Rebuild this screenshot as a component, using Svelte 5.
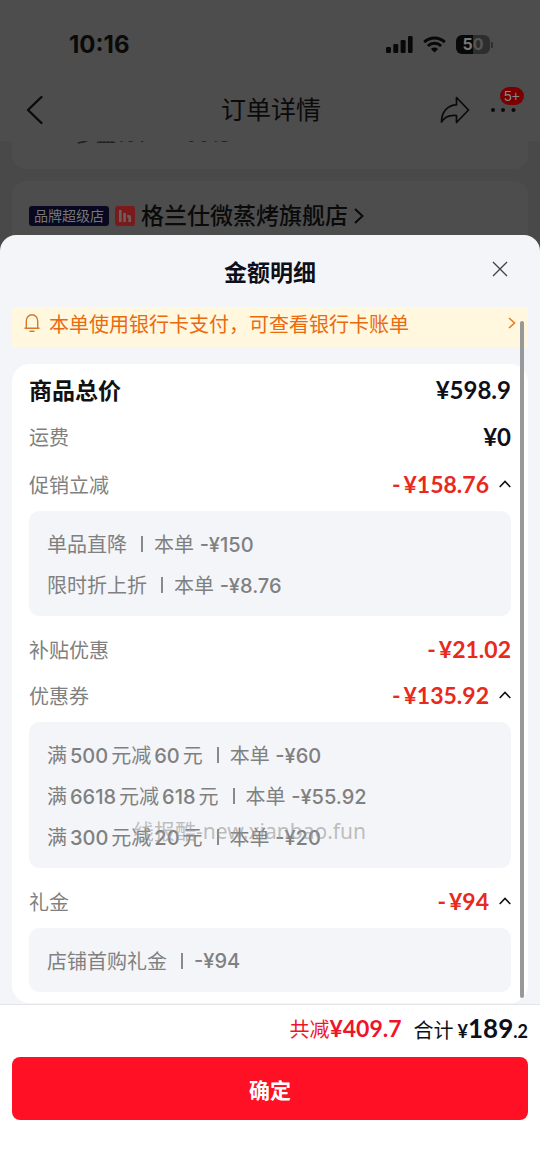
<script>
  let open = $state({ promo: true, coupon: true, gift: true });

  const groups = [
    { id: 'promo', label: '促销立减', amount: '158.76', items: [['单品直降', '本单 ', '-¥150'], ['限时折上折', '本单 ', '-¥8.76']] },
    { id: 'subsidy', label: '补贴优惠', amount: '21.02', items: [] },
    { id: 'coupon', label: '优惠券', amount: '135.92', items: [['满500元减60元', '本单 ', '-¥60'], ['满6618元减618元', '本单 ', '-¥55.92'], ['满300元减20元', '本单 ', '-¥20']] },
    { id: 'gift', label: '礼金', amount: '94', items: [['店铺首购礼金', '', '-¥94']] }
  ];

  // Digits and CJK runs are separated so that numbers get breathing room
  const runs = (text) => text.split(/(\d+)/).filter(Boolean);
</script>

<div class="page">
  <div class="behind">
    <div class="status">
      <span class="time">10:16</span>
      <div class="signals">
        <svg width="27" height="17" viewBox="0 0 27 17" fill="#080808">
          <rect x="0" y="11" width="5" height="6" rx="1.3" /><rect x="7.3" y="8" width="5" height="9" rx="1.3" />
          <rect x="14.6" y="4" width="5" height="13" rx="1.3" /><rect x="22" y="0" width="4.6" height="17" rx="1.3" />
        </svg>
        <svg width="23" height="17" viewBox="0 0 23 17" fill="none" stroke="#080808" stroke-width="3">
          <path d="M1.2 6.1a15 15 0 0 1 20.6 0" /><path d="M4.9 10a9.6 9.6 0 0 1 13.2 0" />
          <path d="M11.5 16.6 7.9 13a5.2 5.2 0 0 1 7.2 0z" fill="#080808" stroke="none" />
        </svg>
        <div class="battery">
          <span>5</span><span class="low">0</span>
          <svg class="cap" width="2" height="6" viewBox="0 0 2 6"><path d="M0 0a3 3 0 0 1 0 6z" fill="#2e2e2e" /></svg>
        </div>
      </div>
    </div>
    <div class="nav">
      <button class="plain back" aria-label="返回">
        <svg width="18" height="30" viewBox="0 0 18 30" fill="none" stroke="#0a0a0a" stroke-width="2.4" stroke-linecap="round" stroke-linejoin="round"><path d="M15.5 2 2 15l13.5 13" /></svg>
      </button>
      <h1>订单详情</h1>
      <div class="actions">
        <button class="plain" aria-label="分享">
          <svg width="30" height="28" viewBox="0 0 30 28" fill="none" stroke="#0a0a0a" stroke-width="1.7" stroke-linejoin="round"><path d="M16.5 1.500 28.500 14 16.500 26.500V19.500C10 18.800 5 20 1.500 26 1.500 15.500 8 9 16.500 8.800z" /></svg>
        </button>
        <button class="plain more" aria-label="更多">
          <svg width="26" height="6" viewBox="0 0 26 6" fill="#0a0a0a"><circle cx="3" cy="3" r="2" /><circle cx="13" cy="3" r="2" /><circle cx="23.500" cy="3" r="2" /></svg>
          <span class="count">5+</span>
        </button>
      </div>
    </div>
    <div class="list">
      <div class="addr"><span>多益101****0018</span></div>
      <div class="shop">
        <span class="tag">品牌超级店</span>
        <svg width="20" height="20" viewBox="0 0 20 20"><rect width="20" height="20" rx="3" fill="#7a1a1a" /><path d="M4 4h2.600v12H4zM8.300 7h2.600v9H8.300zM12.200 9h1.800q2 0 2 2v5h-2.600v-4.500h-1.200z" fill="#6a6060" /></svg>
        <strong>格兰仕微蒸烤旗舰店</strong>
        <svg width="10" height="16" viewBox="0 0 10 16" fill="none" stroke="#0a0a0a" stroke-width="2"><path d="m1 1 7.500 7L1 15" /></svg>
      </div>
    </div>
  </div>

  <section class="sheet">
    <header>
      <h2>金额明细</h2>
      <button class="plain close" aria-label="关闭">
        <svg width="16" height="16" viewBox="0 0 16 16" stroke="#444" stroke-width="1.400"><path d="m1 1 14 14M15 1 1 15" /></svg>
      </button>
    </header>

    <div class="scroll">
      <a class="notice" href="#bill">
        <svg width="16" height="20" viewBox="0 0 16 20" fill="none" stroke="#d9772c" stroke-width="1.400"><path d="M.500 15.300h15M2.300 15V8a5.700 6.300 0 0 1 11.400 0v7M5.500 18.300h5" /></svg>
        <span>本单使用银行卡支付，可查看银行卡账单</span>
        <svg width="8" height="12" viewBox="0 0 8 12" fill="none" stroke="#ea7a24" stroke-width="1.600"><path d="m1 1 5.500 5L1 11" /></svg>
      </a>

      <div class="card">
        <div class="row lead"><b>商品总价</b><span class="money">¥598.9</span></div>
        <div class="row ship"><span>运费</span><span class="money">¥0</span></div>
        {#each groups as g}
          <div class="row">
            <span>{g.label}</span>
            <div class="cut">
              <span class="money red"><i>-</i>¥{g.amount}</span>
              {#if g.items.length}
                <button class="plain" aria-label="展开或收起{g.label}" aria-expanded={open[g.id]} onclick={() => (open[g.id] = !open[g.id])}>
                  <svg class:flip={!open[g.id]} width="12" height="8" viewBox="0 0 12 8" fill="none" stroke="#111" stroke-width="1.600"><path d="m.700 7 5.300-5.500L11.300 7" /></svg>
                </button>
              {/if}
            </div>
          </div>
          {#if g.items.length && open[g.id]}
            <ul>
              {#each g.items as [name, scope, value]}
                <li><span class="name">{#each runs(name) as r}<span class:num={/\d/.test(r)}>{r}</span>{/each}</span><span class="bar"></span><span>{scope}<span class="num">{value}</span></span></li>
              {/each}
            </ul>
          {/if}
        {/each}
      </div>
      <div class="thumb"></div>
      <div class="mark">线报酷-new.xianbao.fun</div>
    </div>

    <footer>
      <div class="sum">
        <span class="saved">共减<span class="money">¥409.7</span></span>
        <span class="total">合计<span class="money"><small>¥</small>189<small>.2</small></span></span>
      </div>
      <button class="ok">确定</button>
    </footer>
  </section>
</div>

<style>
  :global(body) { background: #4a4a4a; }
  .page {
    min-height: 100vh;
    display: flex;
    flex-direction: column;
    background: #494949;
    font-family: Inter, "Noto Sans CJK SC", sans-serif;
    font-size: 20px;
    color: #808080;
  }
  h1, h2, ul { margin: 0; padding: 0; }
  svg { display: block; flex: none; }
  .plain { border: 0; padding: 0; background: none; cursor: pointer; }

  .behind { height: 235px; color: #0a0a0a; display: flex; flex-direction: column; }
  .status { background: #4d4d4d; height: 78px; padding: 10px 50px 0 69px; box-sizing: border-box; display: flex; align-items: center; justify-content: space-between; }
  .time { font-size: 24px; font-weight: 700; }
  .signals { display: flex; align-items: center; gap: 10px; }
  .battery { position: relative; width: 34px; height: 19px; border-radius: 6px; background: linear-gradient(90deg, #080808 50%, #2e2e2e 50%); color: #777; display: flex; align-items: center; justify-content: center; font-size: 16px; font-weight: 700; }
  .battery .low { color: #555; }
  .cap { position: absolute; left: 35px; top: 7px; }
  .nav { background: #4d4d4d; height: 63px; padding: 0 24px 0 26px; display: grid; grid-template-columns: 1fr auto 1fr; align-items: center; }
  .actions { display: flex; align-items: center; justify-content: flex-end; gap: 20px; }
  h1 { font-size: 25px; line-height: 36px; font-weight: 400; }
  .more { position: relative; }
  .count { position: absolute; left: 10px; bottom: 8px; background: #780000; color: #888; font-size: 14px; line-height: 18px; border-radius: 9px; padding: 0 4px; }
  .list { flex: 1; display: flex; flex-direction: column; gap: 12px; padding: 0 12px; overflow: hidden; }
  .addr { height: 28px; background: #4d4d4d; border-radius: 0 0 14px 14px; overflow: hidden; padding-left: 64px; color: #222; }
  .addr span { display: block; line-height: 28px; margin-top: -20px; }
  .shop { flex: 1; background: #4d4d4d; border-radius: 14px 14px 0 0; padding: 16px 17px 0; display: flex; align-items: center; gap: 6px; }
  .shop strong { font-size: 23px; font-weight: 500; line-height: 30px; }
  .tag { background: #080821; color: #777; border-radius: 3px; font-size: 14px; line-height: 20px; padding: 0 5px; }

  .sheet { flex: 1; display: flex; flex-direction: column; background: #f4f5f9; border-radius: 16px 16px 0 0; overflow: hidden; }
  header { height: 72px; display: flex; align-items: center; justify-content: center; position: relative; }
  h2 { font-size: 23px; font-weight: 700; color: #0e0f1a; }
  .close { position: absolute; right: 32px; top: 26px; }
  .scroll { position: relative; padding: 0 12px; }
  .notice { height: 40px; box-sizing: border-box; padding: 0 12px 8px; display: flex; align-items: center; gap: 9px; background: #fff8df; color: #ea6a10; text-decoration: none; }
  .notice span { flex: 1; }
  .card { margin-top: 17px; background: #fff; border-radius: 18px; padding: 1px 17px 11px; }
  .row { height: 46px; display: flex; align-items: center; justify-content: space-between; }
  .lead { height: 48px; }
  .ship { margin-bottom: 2px; }
  b { font-size: 23px; color: #111; }
  .money { font-family: Lato, "Noto Sans CJK SC", sans-serif; font-size: 24px; font-weight: 700; color: #0e0f1a; }
  .red { color: #e8291c; font-size: 23px; }
  .red i { font-style: normal; margin-right: 3px; }
  .cut { display: flex; align-items: center; gap: 10px; }
  .flip { transform: rotate(180deg); }
  ul { list-style: none; background: #f4f5f9; border-radius: 10px; padding: 12px 18px 11px; margin: 4px 0 10px; }
  .card ul:last-child { margin-bottom: 0; }
  li { height: 41px; display: flex; align-items: center; white-space: pre; }
  .name { display: flex; align-items: baseline; gap: 3px; }
  .num { font-weight: 500; }
  .bar { width: 2px; height: 16px; background: #8a8a8a; margin: 0 11px 0 14px; }
  .thumb { position: absolute; right: 16px; top: 14px; bottom: 5px; width: 4px; border-radius: 2px; background: #989898; }
  .mark { position: absolute; left: 0; right: 0; top: 510px; padding-right: 41px; text-align: center; font-size: 21px; line-height: 28px; color: rgba(150, 150, 150, 0.6); font-family: "Noto Sans", "Noto Sans CJK SC", sans-serif; pointer-events: none; }

  footer { flex: 1; margin-top: 1px; border-top: 1px solid #e4e5e8; background: #fff; padding: 3px 12px 0; }
  .sum { height: 40px; display: flex; align-items: center; justify-content: flex-end; gap: 12px; color: #0e0f1a; }
  .saved, .saved .money { color: #f0142a; }
  .sum > span { display: flex; align-items: baseline; }
  .saved .money { font-size: 23px; }
  .total .money { font-size: 26px; margin-left: 4px; }
  small { font-size: 18px; }
  .ok { width: 100%; height: 63px; margin-top: 9px; border: 0; border-radius: 8px; background: #ff1024; color: #fff; font: 700 21px/30px "Noto Sans CJK SC", sans-serif; cursor: pointer; }
</style>
